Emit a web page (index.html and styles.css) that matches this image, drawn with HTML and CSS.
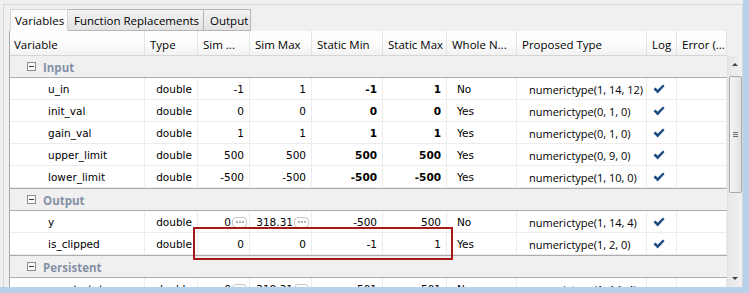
FILE: index.html
```html
<!DOCTYPE html>
<html lang="en">
<head>
  <meta charset="UTF-8">
  <title>Variables</title>
  <link rel="stylesheet" href="styles.css">
</head>
<body>
  <div class="screen">
    <div class="panel">
      <div class="frame">
        <div class="tabs">
          <div class="tab active">Variables</div>
          <div class="tab">Function Replacements</div>
          <div class="tab">Output</div>
        </div>

        <div class="grid-area">
          <div class="table">
            <div class="head cols">
              <div class="hcell">Variable</div>
              <div class="hcell">Type</div>
              <div class="hcell">Sim ...</div>
              <div class="hcell">Sim Max</div>
              <div class="hcell">Static Min</div>
              <div class="hcell">Static Max</div>
              <div class="hcell">Whole N...</div>
              <div class="hcell">Proposed Type</div>
              <div class="hcell">Log</div>
              <div class="hcell">Error (...</div>
            </div>

            <!-- Input -->
            <div class="group first"><span class="collapse"></span>Input</div>
            <div class="row cols">
              <div class="cell name">u_in</div>
              <div class="cell num">double</div>
              <div class="cell num">-1</div>
              <div class="cell num">1</div>
              <div class="cell num bold">-1</div>
              <div class="cell num bold">1</div>
              <div class="cell yn">No</div>
              <div class="cell ptype">numerictype(1, 14, 12)</div>
              <div class="cell log"><svg width="12" height="10" viewBox="0 0 12 10"><path d="M0.5 5.3 L2.6 3.6 L4.6 5.8 L10 0.4 L11.6 1.9 L4.7 9.6 Z"/></svg></div>
              <div class="cell"></div>
            </div>
            <div class="row cols">
              <div class="cell name">init_val</div>
              <div class="cell num">double</div>
              <div class="cell num">0</div>
              <div class="cell num">0</div>
              <div class="cell num bold">0</div>
              <div class="cell num bold">0</div>
              <div class="cell yn">Yes</div>
              <div class="cell ptype">numerictype(0, 1, 0)</div>
              <div class="cell log"><svg width="12" height="10" viewBox="0 0 12 10"><path d="M0.5 5.3 L2.6 3.6 L4.6 5.8 L10 0.4 L11.6 1.9 L4.7 9.6 Z"/></svg></div>
              <div class="cell"></div>
            </div>
            <div class="row cols">
              <div class="cell name">gain_val</div>
              <div class="cell num">double</div>
              <div class="cell num">1</div>
              <div class="cell num">1</div>
              <div class="cell num bold">1</div>
              <div class="cell num bold">1</div>
              <div class="cell yn">Yes</div>
              <div class="cell ptype">numerictype(0, 1, 0)</div>
              <div class="cell log"><svg width="12" height="10" viewBox="0 0 12 10"><path d="M0.5 5.3 L2.6 3.6 L4.6 5.8 L10 0.4 L11.6 1.9 L4.7 9.6 Z"/></svg></div>
              <div class="cell"></div>
            </div>
            <div class="row cols">
              <div class="cell name">upper_limit</div>
              <div class="cell num">double</div>
              <div class="cell num">500</div>
              <div class="cell num">500</div>
              <div class="cell num bold">500</div>
              <div class="cell num bold">500</div>
              <div class="cell yn">Yes</div>
              <div class="cell ptype">numerictype(0, 9, 0)</div>
              <div class="cell log"><svg width="12" height="10" viewBox="0 0 12 10"><path d="M0.5 5.3 L2.6 3.6 L4.6 5.8 L10 0.4 L11.6 1.9 L4.7 9.6 Z"/></svg></div>
              <div class="cell"></div>
            </div>
            <div class="row cols">
              <div class="cell name">lower_limit</div>
              <div class="cell num">double</div>
              <div class="cell num">-500</div>
              <div class="cell num">-500</div>
              <div class="cell num bold">-500</div>
              <div class="cell num bold">-500</div>
              <div class="cell yn">Yes</div>
              <div class="cell ptype">numerictype(1, 10, 0)</div>
              <div class="cell log"><svg width="12" height="10" viewBox="0 0 12 10"><path d="M0.5 5.3 L2.6 3.6 L4.6 5.8 L10 0.4 L11.6 1.9 L4.7 9.6 Z"/></svg></div>
              <div class="cell"></div>
            </div>

            <!-- Output -->
            <div class="group"><span class="collapse"></span>Output</div>
            <div class="row cols">
              <div class="cell name">y</div>
              <div class="cell num">double</div>
              <div class="cell num">0<span class="more"><i></i><i></i><i></i></span></div>
              <div class="cell num">318.31<span class="more"><i></i><i></i><i></i></span></div>
              <div class="cell num">-500</div>
              <div class="cell num">500</div>
              <div class="cell yn">No</div>
              <div class="cell ptype">numerictype(1, 14, 4)</div>
              <div class="cell log"><svg width="12" height="10" viewBox="0 0 12 10"><path d="M0.5 5.3 L2.6 3.6 L4.6 5.8 L10 0.4 L11.6 1.9 L4.7 9.6 Z"/></svg></div>
              <div class="cell"></div>
            </div>
            <div class="row cols marked">
              <div class="cell name">is_clipped</div>
              <div class="cell num">double</div>
              <div class="cell num">0</div>
              <div class="cell num">0</div>
              <div class="cell num">-1</div>
              <div class="cell num">1</div>
              <div class="cell yn">Yes</div>
              <div class="cell ptype">numerictype(1, 2, 0)</div>
              <div class="cell log"><svg width="12" height="10" viewBox="0 0 12 10"><path d="M0.5 5.3 L2.6 3.6 L4.6 5.8 L10 0.4 L11.6 1.9 L4.7 9.6 Z"/></svg></div>
              <div class="cell"></div>
              <span class="highlight"></span>
            </div>

            <!-- Persistent -->
            <div class="group"><span class="collapse"></span>Persistent</div>
            <div class="row cols">
              <div class="cell name">count_state</div>
              <div class="cell num">double</div>
              <div class="cell num">0<span class="more"><i></i><i></i><i></i></span></div>
              <div class="cell num">318.31<span class="more"><i></i><i></i><i></i></span></div>
              <div class="cell num">-501</div>
              <div class="cell num">501</div>
              <div class="cell yn">No</div>
              <div class="cell ptype">numerictype(1, 14, 4)</div>
              <div class="cell log"></div>
              <div class="cell"></div>
            </div>
          </div>

          <div class="vscroll">
            <div class="sb-btn"><span class="arrow up"></span></div>
            <div class="thumb"><span class="grip"></span></div>
            <div class="sb-track"></div>
            <div class="sb-btn"><span class="arrow down"></span></div>
          </div>
        </div>
      </div>
    </div>
    <div class="edge-right"></div>
    <div class="edge-bottom"></div>
  </div>
</body>
</html>
```

FILE: styles.css
```css
body {
  margin: 0;
  background: #b9d1ea;
  font-family: "Open Sans", "Liberation Sans", sans-serif;
  font-size: 11.5px;
  color: #000;
}
.screen {
  width: 749px;
  height: 293px;
  display: grid;
  grid-template-columns: 743px 6px;
  grid-template-rows: 287px 6px;
  overflow: hidden;
}
.edge-right { background: #b9d1ea; }
.edge-bottom { grid-column: 1 / 3; background: #b9d1ea; }

.panel {
  background: #f0f0f0;
  padding: 4px 0 0 3px;
  overflow: hidden;
  display: flex;
}
.frame {
  width: 740px;
  box-sizing: border-box;
  border: 1px solid #d7d7d7;
  border-bottom: none;
  display: flex;
  flex-direction: column;
  overflow: hidden;
}

/* tabs */
.tabs {
  display: flex;
  margin: 4px 0 0 6px;
  height: 22px;
}
.tab {
  box-sizing: border-box;
  height: 22px;
  padding: 3px 5px 0 5px;
  border: 1px solid #b4b4b4;
  border-left: none;
  background: linear-gradient(#f3f3f3, #e3e3e3);
  white-space: nowrap;
}
.tab:first-child { border-left: 1px solid #d4d4d4; }
.tab.active {
  background: #fcfcfc;
  border-color: #d4d4d4;
  border-bottom: none;
  padding-left: 4px;
  width: 58px;
}
.tab:nth-child(2) { width: 136px; padding-left: 6px; }
.tab:nth-child(3) { width: 47px; padding-left: 6px; }

/* table */
.grid-area {
  display: flex;
  flex: 1;
  min-height: 0;
}
.table {
  margin-left: 5px;
  border-left: 1px solid #a8a8a8;
  width: 717px;
}
.cols {
  display: grid;
  grid-template-columns: 135px 53px 52px 62px 71px 64px 70px 130px 30px 50px;
}
.head {
  height: 25px;
  box-sizing: border-box;
  background: linear-gradient(#ffffff, #fbfbfb 60%, #f2f2f2);
  border-bottom: 1px solid #d5d5d5;
}
.hcell {
  border-right: 1px solid #e3e3e3;
  padding: 6px 0 0 4px;
  white-space: nowrap;
  overflow: hidden;
}
.hcell:nth-child(n+2) { padding-left: 5px; }

.group {
  height: 23px;
  box-sizing: border-box;
  background: #f0f0f0;
  border-top: 1px solid #acacac;
  border-bottom: 1px solid #acacac;
  display: flex;
  align-items: center;
  padding: 2px 0 0 17px;
  font-weight: bold;
  color: #8591a6;
}
.group.first { height: 22px; border-top: none; }
.collapse {
  width: 7px;
  height: 7px;
  border: 1px solid #8e8e8e;
  margin: -2px 7px 0 0;
  position: relative;
  background: #fafafa;
}
.collapse::after {
  content: "";
  position: absolute;
  left: 1px;
  top: 3px;
  width: 5px;
  height: 1px;
  background: #3c3c3c;
}

.row {
  height: 22px;
  box-sizing: border-box;
  background: #fff;
  border-bottom: 1px solid #ececec;
  font-family: "DejaVu Sans", sans-serif;
  font-size: 10.5px;
}
.cell {
  border-right: 1px solid #ececec;
  padding: 1px 5px 0 5px;
  display: flex;
  align-items: center;
  white-space: nowrap;
  overflow: hidden;
}
.cell.name { padding-left: 38px; }
.cell.num { justify-content: flex-end; }
.cell.bold { font-weight: bold; }
.cell.yn { padding-left: 10px; }
.cell.ptype {
  padding-left: 12px;
  font-family: "Open Sans", "Liberation Sans", sans-serif;
  font-size: 11px;
}
.cell.log { padding: 0 0 0 6px; }
.cell.log svg { fill: #1d4c84; }

.more {
  width: 13px;
  height: 9px;
  margin-left: 1px;
  margin-right: -3px;
  border: 1px solid #c6c6c6;
  border-radius: 4px;
  display: inline-flex;
  align-items: center;
  justify-content: center;
  gap: 1px;
  background: #fdfdfd;
}
.more i {
  width: 2px;
  height: 2px;
  background: #b0b0b0;
}

.marked { position: relative; }
.highlight {
  position: absolute;
  left: 183px;
  top: -6px;
  width: 260px;
  height: 33px;
  box-sizing: border-box;
  border: 2px solid #a41818;
}

/* scrollbar */
.vscroll {
  width: 15px;
  margin-top: 25px;
  display: flex;
  flex-direction: column;
  background: linear-gradient(90deg, #e6e6e6, #f2f2f2);
  border-left: 1px solid #e2e2e2;
  box-sizing: border-box;
}
.sb-btn {
  height: 17px;
  display: flex;
  align-items: center;
  justify-content: center;
}
.arrow {
  width: 0;
  height: 0;
  border-left: 3px solid transparent;
  border-right: 3px solid transparent;
}
.arrow.up { border-bottom: 3px solid #404040; }
.arrow.down { border-top: 3px solid #404040; }
.thumb {
  height: 117px;
  margin: 3px 0 0 1px;
  box-sizing: border-box;
  border: 1px solid #a9a9a9;
  border-radius: 2px;
  background: linear-gradient(90deg, #f5f5f5, #e2e2e2);
  display: flex;
  align-items: center;
  justify-content: center;
}
.grip {
  width: 5px;
  height: 5px;
  background: repeating-linear-gradient(#6e6e6e 0 1px, transparent 1px 2px);
}
.sb-track { flex: 1; }
```
